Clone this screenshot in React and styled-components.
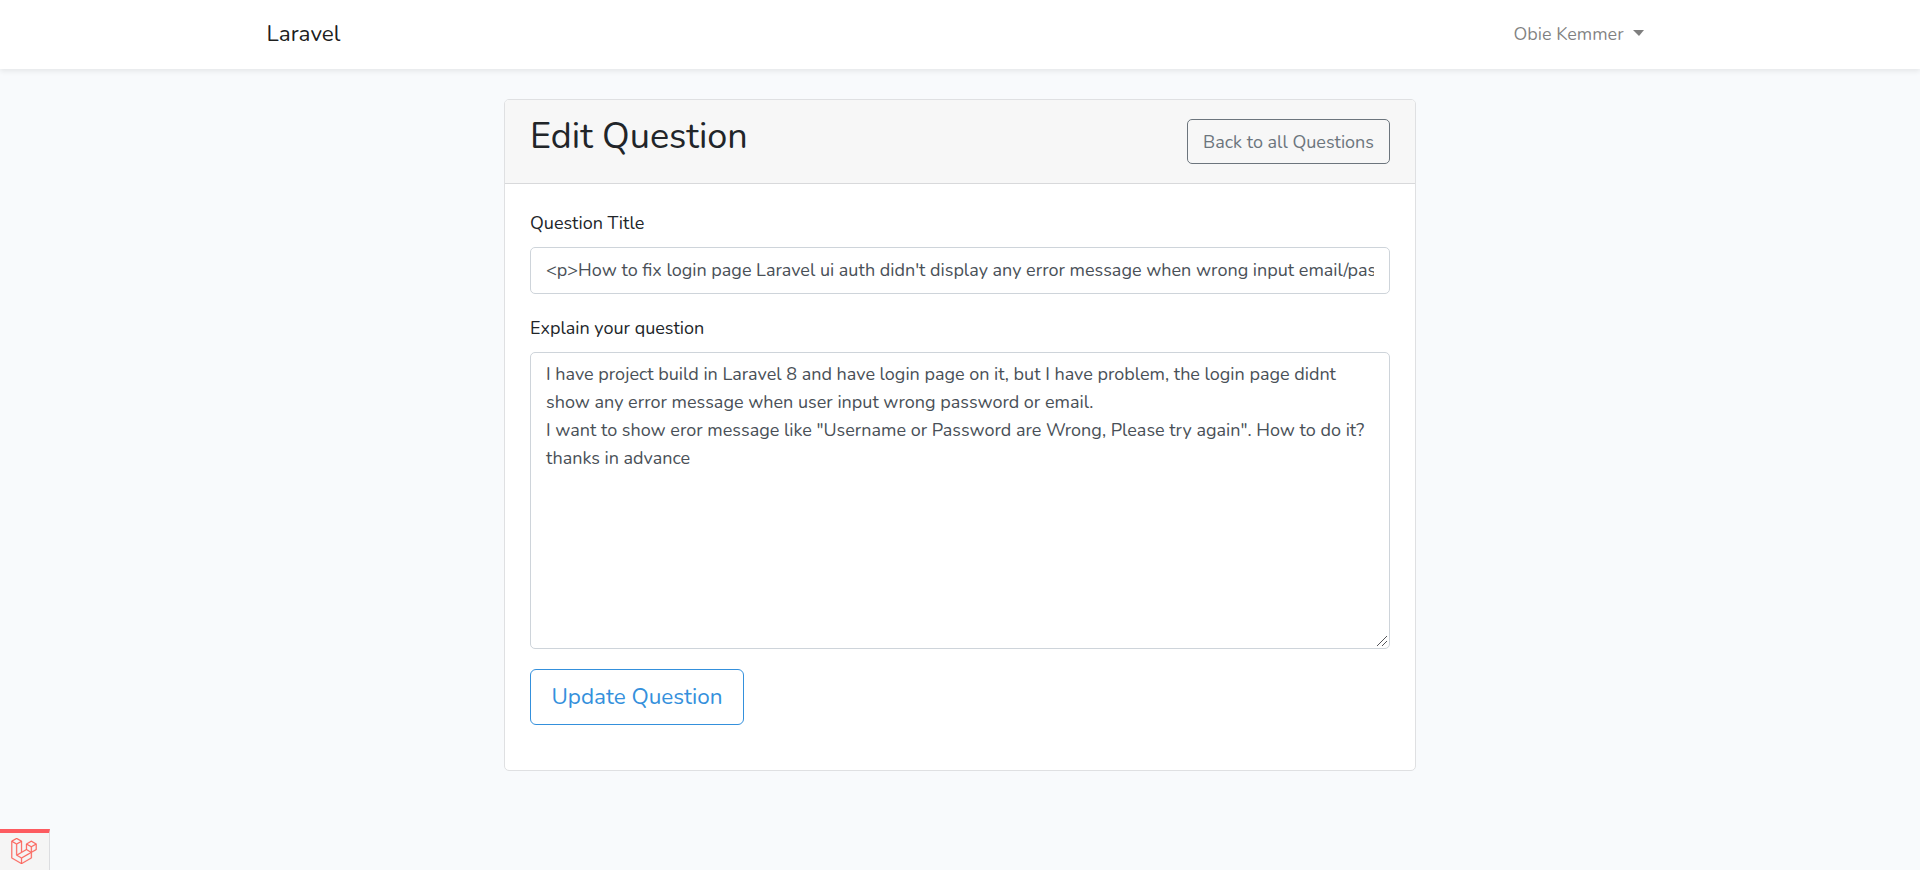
import React from "react";
import styled, { createGlobalStyle } from "styled-components";
import { SiLaravel } from "react-icons/si";

const GlobalStyle = createGlobalStyle`
  *, *::before, *::after { box-sizing: border-box; }
  body {
    margin: 0;
    background: #f8fafc;
    color: #212529;
    font-family: Nunito, Lato, "Open Sans", sans-serif;
    font-size: 18px;
    line-height: 28px;
    overflow: hidden;
  }
  input, textarea, button { font-family: inherit; }
`;

const Page = styled.div`
  height: 870px;
  display: flex;
  flex-direction: column;
`;

const Navbar = styled.nav`
  flex: none;
  height: 69px;
  background: #fff;
  box-shadow: 0 2.5px 5px rgba(0, 0, 0, 0.075);
`;

const Container = styled.div`
  width: 1388px;
  height: 100%;
  margin: 0 auto;
  padding: 0 0 2px 0.5px;
  display: flex;
  align-items: center;
  justify-content: space-between;
`;

const Brand = styled.a`
  font-size: 22.5px;
  color: rgba(0, 0, 0, 0.9);
`;

const UserMenu = styled.a`
  display: flex;
  align-items: center;
  gap: 9px;
  padding-right: 10.4px;
  color: rgba(0, 0, 0, 0.5);
`;

const Caret = styled.span`
  border-top: 6px solid;
  border-left: 6px solid transparent;
  border-right: 5px solid transparent;
  margin-top: -2px;
`;

const Main = styled.main`
  flex: 1;
  padding-top: 30px;
`;

const Card = styled.section`
  width: 912px;
  height: 672px;
  margin: 0 auto;
  background: #fff;
  border: 1px solid #dfe0e2;
  border-radius: 5px;
  overflow: hidden;
`;

const CardHeader = styled.header`
  height: 84px;
  padding: 0 25px;
  display: flex;
  align-items: center;
  justify-content: space-between;
  background: #f7f7f7;
  border-bottom: 1px solid #d8d9db;
`;

const Title = styled.h2`
  margin: 0 0 10px;
  font-size: 36px;
  line-height: 43px;
  font-weight: 400;
`;

const Button = styled.button`
  flex: none;
  width: ${(p) => (p.$large ? 214 : 203)}px;
  height: ${(p) => (p.$large ? 56 : 45)}px;
  padding: ${(p) => (p.$large ? "0 0 2px" : "0")};
  font-size: ${(p) => (p.$large ? 22.5 : 18)}px;
  color: ${(p) => p.$color};
  background: transparent;
  border: 1px solid ${(p) => p.$color};
  border-radius: ${(p) => (p.$large ? 6 : 5)}px;
`;

const Form = styled.form`
  display: flex;
  flex-direction: column;
  align-items: flex-start;
  padding: 25px;
`;

const Group = styled.div`
  width: 100%;
  display: flex;
  flex-direction: column;
  margin-bottom: 20px;
`;

const Label = styled.label`
  margin-bottom: 10px;
`;

const Input = styled.input`
  width: 100%;
  height: 47px;
  padding: 6px 15px 8px;
  font-size: 18px;
  color: #495057;
  background: #fff;
  border: 1px solid #ced4da;
  border-radius: 5px;
  outline: none;
`;

const TextAreaFrame = styled.div`
  position: relative;
`;

const TextArea = styled.textarea`
  display: block;
  width: 100%;
  height: 297px;
  padding: 7px 15px;
  font-size: 18px;
  line-height: 28px;
  color: #495057;
  background: #fff;
  border: 1px solid #ced4da;
  border-radius: 5px;
  outline: none;
  resize: none;
  overflow: auto;
`;

const Grip = styled.svg`
  position: absolute;
  right: 2px;
  bottom: 2px;
  width: 12px;
  height: 12px;
  stroke: #55565a;
  stroke-width: 1;
  pointer-events: none;
`;

const DebugBar = styled.aside`
  flex: none;
  width: 50px;
  height: 41px;
  display: flex;
  justify-content: center;
  padding: 5px 2px 0 0;
  background: #f5f5f5;
  border-top: 4px solid #fd5b60;
  border-right: 1px solid #dcdde0;
  color: #fb6058;

  svg {
    stroke: currentColor;
    stroke-width: 0.3;
  }
`;

const question = `I have project build in Laravel 8 and have login page on it, but I have problem, the login page didnt show any error message when user input wrong password or email.
I want to show eror message like "Username or Password are Wrong, Please try again". How to do it?
thanks in advance`;

export default function App() {
  return (
    <Page>
      <GlobalStyle />
      <Navbar>
        <Container>
          <Brand>Laravel</Brand>
          <UserMenu>
            Obie Kemmer
            <Caret />
          </UserMenu>
        </Container>
      </Navbar>
      <Main>
        <Card>
          <CardHeader>
            <Title>Edit Question</Title>
            <Button $color="#6c757d">Back to all Questions</Button>
          </CardHeader>
          <Form>
            <Group>
              <Label htmlFor="title">Question Title</Label>
              <Input
                id="title"
                defaultValue="<p>How to fix login page Laravel ui auth didn't display any error message when wrong input email/password</p>"
              />
            </Group>
            <Group>
              <Label htmlFor="body">Explain your question</Label>
              <TextAreaFrame>
                <TextArea id="body" spellCheck={false} defaultValue={question} />
                <Grip viewBox="0 0 12 12">
                  <path d="M1 11 L11 1 M6 11 L11 6" />
                </Grip>
              </TextAreaFrame>
            </Group>
            <Button type="button" $large $color="#3490dc">Update Question</Button>
          </Form>
        </Card>
      </Main>
      <DebugBar>
        <SiLaravel size={26} />
      </DebugBar>
    </Page>
  );
}
